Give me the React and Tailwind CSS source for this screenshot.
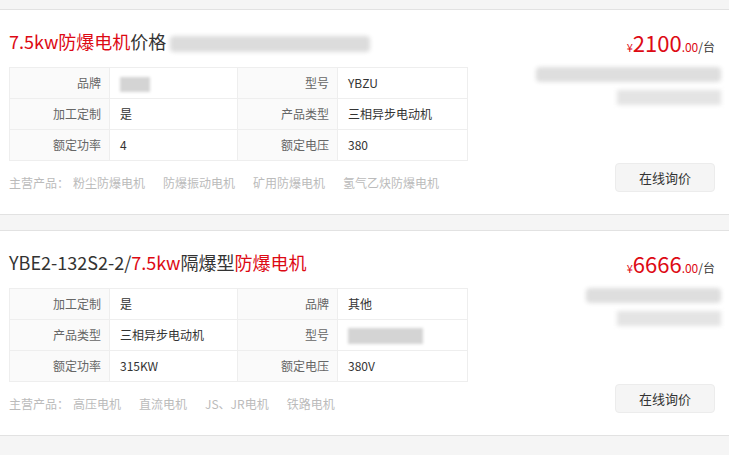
import React from "react";

// product list data
const products = [
  {
    title: (
      <>
        <span className="text-[#dd0a14]">7.5kw防爆电机</span>
        <span>价格</span>
        <span className="inline-block align-middle ml-1 w-[200px] h-[16px] bg-[#dcdcdc] blur-[2px] rounded-sm" />
      </>
    ),
    rows: [
      ["品牌", <span className="inline-block align-middle w-[30px] h-[15px] bg-[#d4d4d4] blur-[1.5px]" />, "型号", "YBZU"],
      ["加工定制", "是", "产品类型", "三相异步电动机"],
      ["额定功率", "4", "额定电压", "380"],
    ],
    main: ["粉尘防爆电机", "防爆振动电机", "矿用防爆电机", "氢气乙炔防爆电机"],
    price: "2100",
    blur1: "w-[185px]",
  },
  {
    title: (
      <>
        <span>YBE2-132S2-2/</span>
        <span className="text-[#dd0a14]">7.5kw</span>
        <span>隔爆型</span>
        <span className="text-[#dd0a14]">防爆电机</span>
      </>
    ),
    rows: [
      ["加工定制", "是", "品牌", "其他"],
      ["产品类型", "三相异步电动机", "型号", <span className="inline-block align-middle w-[75px] h-[16px] bg-[#d4d4d4] blur-[1.5px]" />],
      ["额定功率", "315KW", "额定电压", "380V"],
    ],
    main: ["高压电机", "直流电机", "JS、JR电机", "铁路电机"],
    price: "6666",
    blur1: "w-[135px]",
  },
];

function Card({ p }) {
  return (
    <div className="bg-white border-t border-b border-[#e2e2e2] flex h-[206px]">
      {/* left side */}
      <div className="w-[470px] pl-[9px] pt-[19px]">
        <div className="text-[18px] leading-[24px] text-[#333] h-[24px] whitespace-nowrap">{p.title}</div>
        <table className="mt-[14px] w-[459px] border-collapse text-[12px] text-[#333]">
          <tbody>
            {p.rows.map((r, i) => (
              <tr key={i} className="h-[31px]">
                <td className="w-[100px] border border-[#eeeeee] bg-[#fafafa] text-right pr-[8px] text-[#666]">{r[0]}</td>
                <td className="w-[128px] border border-[#eeeeee] pl-[10px]">{r[1]}</td>
                <td className="w-[100px] border border-[#eeeeee] bg-[#fafafa] text-right pr-[8px] text-[#666]">{r[2]}</td>
                <td className="border border-[#eeeeee] pl-[10px]">{r[3]}</td>
              </tr>
            ))}
          </tbody>
        </table>
        <div className="mt-[15px] text-[12px] leading-[14px] text-[#bbbbbb] flex gap-[18px] whitespace-nowrap">
          <span className="-mr-[14px]">主营产品：</span>
          {p.main.map((m) => (
            <span key={m}>{m}</span>
          ))}
        </div>
      </div>

      {/* right side */}
      <div className="flex-1 flex flex-col items-end pr-[14px] pt-[20px]">
        <div className="text-[#dd0a14] leading-[24px] whitespace-nowrap">
          <span className="text-[11px]">¥</span>
          <span className="text-[22px]">{p.price}</span>
          <span className="text-[12px]">.00</span>
          <span className="text-[12px] text-[#333]">/台</span>
        </div>
        <div className={`mt-[8px] h-[15px] ${p.blur1} -mr-[6px] bg-[#dedede] blur-[2px] rounded-sm`} />
        <div className="mt-[8px] h-[15px] w-[104px] -mr-[6px] bg-[#e4e4e4] blur-[2px]" />
        <div className="mt-auto mb-[22px] w-[100px] h-[29px] bg-[#f5f5f5] border border-[#ececec] rounded-sm flex items-center justify-center text-[13px] text-[#333]">
          在线询价
        </div>
      </div>
    </div>
  );
}

export default function App() {
  return (
    <div
      className="w-[729px] h-[455px] bg-[#f5f5f5] pt-[9px] overflow-hidden"
      style={{ fontFamily: '"Noto Sans CJK SC", "Noto Sans", sans-serif' }}
    >
      <Card p={products[0]} />
      <div className="h-[15px]" />
      <Card p={products[1]} />
    </div>
  );
}
